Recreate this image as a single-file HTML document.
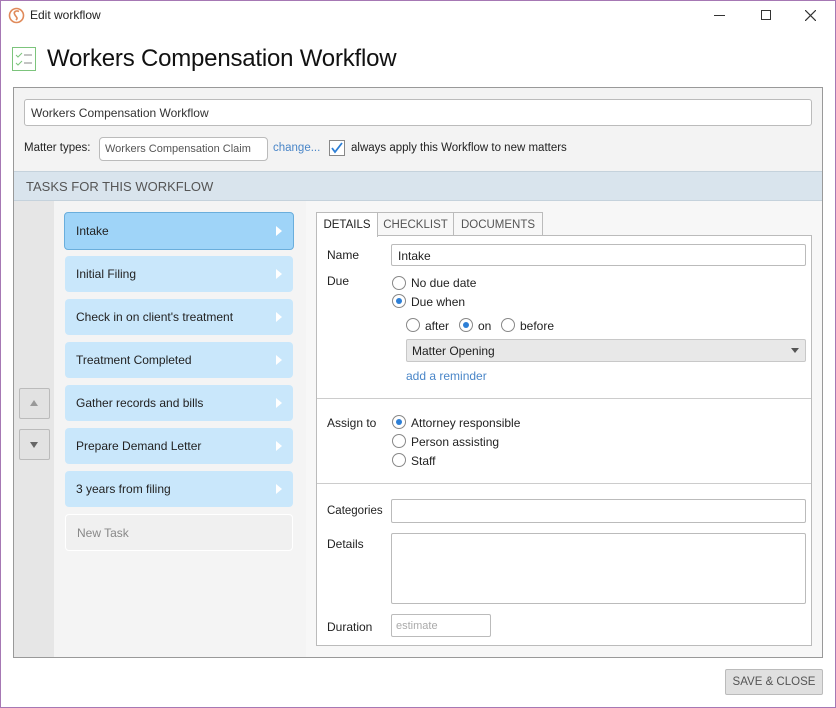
<!DOCTYPE html>
<html><head><style>
*{box-sizing:border-box;margin:0;padding:0}
body{width:836px;height:708px;background:#fff;font-family:"Liberation Sans",sans-serif;font-size:12px;color:#222;position:relative;overflow:hidden}
.a{position:absolute;white-space:nowrap}
.frame{left:0;top:0;width:836px;height:708px;border:1px solid #a678b4}
.task{position:absolute;left:65px;width:228px;height:36px;background:#c9e7fb;border-radius:4px;padding-left:11px;line-height:36px;font-size:12px;color:#222;white-space:nowrap}
.task.ar:after{content:"";position:absolute;right:11px;top:13px;border-left:6px solid #fff;border-top:5px solid transparent;border-bottom:5px solid transparent}
.radio{position:absolute;width:14px;height:14px;border:1px solid #888;border-radius:50%;background:#fff}
.radio.on:after{content:"";position:absolute;left:3px;top:3px;width:6px;height:6px;border-radius:50%;background:#2d7fd6}
.lbl{position:absolute;font-size:12px;color:#222;white-space:nowrap}
.inp{position:absolute;background:#fff;border:1px solid #bbb;border-radius:2px;white-space:nowrap;overflow:hidden}
</style></head><body>
<div class="a frame"></div>
<svg class="a" style="left:8px;top:7px" width="17" height="17" viewBox="0 0 17 17"><circle cx="8.5" cy="8.5" r="7" fill="none" stroke="#e08a5a" stroke-width="1.6"/><path d="M11 4.5C8 3 5 5 7 8s3 3 1 5" fill="none" stroke="#e08a5a" stroke-width="1.6"/></svg>
<div class="lbl" style="left:30px;top:8px;font-size:12px">Edit workflow</div>
<div class="a" style="left:714px;top:15px;width:11px;height:1px;background:#333"></div>
<div class="a" style="left:761px;top:10px;width:10px;height:10px;border:1px solid #333"></div>
<svg class="a" style="left:805px;top:10px" width="11" height="11"><path d="M0 0L11 11M11 0L0 11" stroke="#333" stroke-width="1.2"/></svg>
<svg class="a" style="left:12px;top:47px" width="25" height="25" viewBox="0 0 25 25"><rect x="0.5" y="0.5" width="23" height="23" fill="none" stroke="#7cc47c"/><path d="M4 8l2 2 4-4M4 16l2 2 4-4" fill="none" stroke="#7cc47c"/><path d="M12 8h8M12 16h8" stroke="#888"/></svg>
<div class="lbl" style="left:47px;top:45px;font-size:24px;color:#111;letter-spacing:-0.2px">Workers Compensation Workflow</div>
<div class="a" style="left:13px;top:87px;width:810px;height:571px;border:1px solid #999;background:#f3f3f3"></div>
<div class="inp" style="left:24px;top:99px;width:788px;height:27px;border-radius:3px;padding:6px 6px;font-size:12px;color:#333">Workers Compensation Workflow</div>
<div class="lbl" style="left:24px;top:142px;font-size:11.5px">Matter types:</div>
<div class="inp" style="left:99px;top:137px;width:169px;height:24px;border-radius:4px;padding:5px 5px;color:#555;font-size:11px">Workers Compensation Claim</div>
<div class="lbl" style="left:273px;top:142px;color:#4a86c8;font-size:11.5px">change...</div>
<div class="a" style="left:329px;top:140px;width:16px;height:16px;border:1px solid #888;background:#fff"></div>
<svg class="a" style="left:331px;top:142px" width="12" height="12"><path d="M1 6l3 4 7-9" fill="none" stroke="#2d7fd6" stroke-width="1.8"/></svg>
<div class="lbl" style="left:351px;top:142px;font-size:11.5px">always apply this Workflow to new matters</div>
<div class="a" style="left:14px;top:171px;width:808px;height:30px;background:#d9e4ed;border-top:1px solid #c5d2dc;border-bottom:1px solid #c5d2dc"></div>
<div class="lbl" style="left:26px;top:179px;font-size:13px;color:#555">TASKS FOR THIS WORKFLOW</div>
<div class="a" style="left:14px;top:201px;width:40px;height:456px;background:#e6e6e6"></div>
<div class="a" style="left:54px;top:201px;width:252px;height:456px;background:#f4f4f4"></div>
<div class="a" style="left:19px;top:388px;width:31px;height:31px;border:1px solid #bbb;border-radius:2px;background:#e2e2e2"></div>
<div class="a" style="left:30px;top:400px;border-bottom:6px solid #999;border-left:4px solid transparent;border-right:4px solid transparent"></div>
<div class="a" style="left:19px;top:429px;width:31px;height:31px;border:1px solid #bbb;border-radius:2px;background:#e2e2e2"></div>
<div class="a" style="left:30px;top:442px;border-top:6px solid #666;border-left:4px solid transparent;border-right:4px solid transparent"></div>
<div class="task ar" style="top:212px;height:38px;background:#9fd4f8;border:1px solid #6aaedc;left:64px;width:230px">Intake</div>
<div class="task ar" style="top:256px">Initial Filing</div>
<div class="task ar" style="top:299px">Check in on client's treatment</div>
<div class="task ar" style="top:342px">Treatment Completed</div>
<div class="task ar" style="top:385px">Gather records and bills</div>
<div class="task ar" style="top:428px">Prepare Demand Letter</div>
<div class="task ar" style="top:471px">3 years from filing</div>
<div class="task" style="top:514px;background:#f0f0f0;border:1px solid #fff;color:#888;height:37px">New Task</div>
<div class="a" style="left:306px;top:201px;width:516px;height:456px;background:#f7f7f7"></div>
<div class="a" style="left:316px;top:235px;width:496px;height:411px;background:#fff;border:1px solid #bbb"></div>
<div class="a" style="left:316px;top:212px;width:62px;height:25px;background:#fff;border:1px solid #bbb;border-bottom:none;padding:6px 0;text-align:center;color:#222;font-size:11.5px">DETAILS</div>
<div class="a" style="left:377px;top:212px;width:77px;height:24px;background:#f7f7f7;border:1px solid #bbb;padding:6px 0;text-align:center;color:#555;font-size:11.5px">CHECKLIST</div>
<div class="a" style="left:453px;top:212px;width:90px;height:24px;background:#f7f7f7;border:1px solid #bbb;padding:6px 0;text-align:center;color:#555;font-size:11.5px">DOCUMENTS</div>
<div class="lbl" style="left:327px;top:248px">Name</div>
<div class="inp" style="left:391px;top:244px;width:415px;height:22px;padding:4px 6px">Intake</div>
<div class="lbl" style="left:327px;top:274px">Due</div>
<div class="radio" style="left:392px;top:276px"></div><div class="lbl" style="left:411px;top:276px">No due date</div>
<div class="radio on" style="left:392px;top:294px"></div><div class="lbl" style="left:411px;top:295px">Due when</div>
<div class="radio" style="left:406px;top:318px"></div><div class="lbl" style="left:425px;top:319px">after</div>
<div class="radio on" style="left:459px;top:318px"></div><div class="lbl" style="left:478px;top:319px">on</div>
<div class="radio" style="left:501px;top:318px"></div><div class="lbl" style="left:520px;top:319px">before</div>
<div class="a" style="left:406px;top:339px;width:400px;height:23px;background:#e8e8e8;border:1px solid #c8c8c8;border-radius:2px;padding:4px 5px">Matter Opening</div>
<div class="a" style="left:791px;top:348px;border-top:5px solid #555;border-left:4px solid transparent;border-right:4px solid transparent"></div>
<div class="lbl" style="left:406px;top:369px;color:#4a86c8">add a reminder</div>
<div class="a" style="left:317px;top:398px;width:494px;height:1px;background:#ccc"></div>
<div class="lbl" style="left:327px;top:416px">Assign to</div>
<div class="radio on" style="left:392px;top:415px"></div><div class="lbl" style="left:411px;top:416px">Attorney responsible</div>
<div class="radio" style="left:392px;top:434px"></div><div class="lbl" style="left:411px;top:435px">Person assisting</div>
<div class="radio" style="left:392px;top:453px"></div><div class="lbl" style="left:411px;top:454px">Staff</div>
<div class="a" style="left:317px;top:483px;width:494px;height:1px;background:#ccc"></div>
<div class="lbl" style="left:327px;top:505px;font-size:11.5px">Categories</div>
<div class="inp" style="left:391px;top:499px;width:415px;height:24px"></div>
<div class="lbl" style="left:327px;top:537px">Details</div>
<div class="inp" style="left:391px;top:533px;width:415px;height:71px"></div>
<div class="lbl" style="left:327px;top:620px">Duration</div>
<div class="inp" style="left:391px;top:614px;width:100px;height:23px;padding:5px 4px;color:#aaa;font-size:11px">estimate</div>
<div class="a" style="left:725px;top:669px;width:98px;height:26px;background:#e0e0e0;border:1px solid #bbb;border-radius:2px;text-align:center;line-height:24px;font-size:11.5px;color:#555">SAVE &amp; CLOSE</div>
</body></html>
